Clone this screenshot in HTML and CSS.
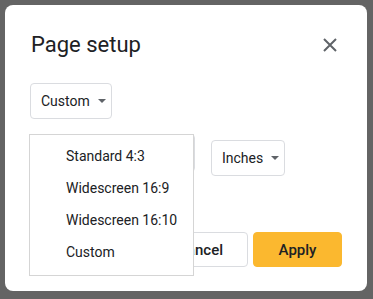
FILE: index.html
```html
<!DOCTYPE html>
<html lang="en">
<head>
    <meta charset="UTF-8">
    <meta name="viewport" content="width=device-width, initial-scale=1.0">
    <title>Page setup</title>
    <link rel="stylesheet" href="styles.css">
</head>
<body>
    <div class="dialog">
        <header class="dialog-head">
            <h1>Page setup</h1>
            <button class="close" aria-label="Close">
                <svg width="14" height="14" viewBox="0 0 14 14">
                    <path d="M1 1L13 13M13 1L1 13" stroke="#5f6368" stroke-width="2"/>
                </svg>
            </button>
        </header>

        <div class="dropdown size">Custom <span class="caret"></span></div>

        <div class="row">
            <div class="dropdown wide"></div>
            <div class="dropdown">Inches <span class="caret"></span></div>
        </div>

        <footer class="actions">
            <button class="btn">Cancel</button>
            <button class="btn primary">Apply</button>
        </footer>

        <!-- menu abierto sobre la fila -->
        <ul class="menu">
            <li>Standard 4:3</li>
            <li>Widescreen 16:9</li>
            <li>Widescreen 16:10</li>
            <li>Custom</li>
        </ul>
    </div>
</body>
</html>
```

FILE: styles.css
```css
* {
    box-sizing: border-box;
    margin: 0;
    padding: 0;
}

body {
    font-family: Roboto, "Liberation Sans", Arial, sans-serif;
    background-color: #646464;
    color: #202124;
    padding: 5px;
}

.dialog {
    position: relative;
    width: 362px;
    height: 286px;
    background-color: white;
    border-radius: 8px;
    padding: 25px 25px 24px 25px;
    display: flex;
    flex-direction: column;
    align-items: flex-start;
}

.dialog-head {
    width: 100%;
    display: flex;
    justify-content: space-between;
    align-items: center;
    height: 29px;
}

h1 {
    font-size: 22px;
    font-weight: 400;
    line-height: 28px;
    margin-left: 1px;
}

.close {
    background: none;
    border: none;
    width: 14px;
    height: 14px;
    margin-right: 5px;
    margin-top: 1px;
    display: flex;
}

.dropdown {
    height: 36px;
    border: 1px solid #dadce0;
    border-radius: 4px;
    padding: 0 8px 0 10px;
    font-size: 14px;
    display: flex;
    align-items: center;
    gap: 8px;
    background-color: white;
}

.size {
    margin-top: 24px;
    width: 82px;
}

.row {
    display: flex;
    align-items: flex-end;
    gap: 16px;
    margin-top: 15px;
}

.row .dropdown {
    width: 74px;
}

.row .dropdown.wide {
    width: 165px;
    height: 38px;
    margin-bottom: 4px;
}

.caret {
    width: 0;
    height: 0;
    border-left: 4px solid transparent;
    border-right: 4px solid transparent;
    border-top: 4px solid #5f6368;
}

.actions {
    margin-top: auto;
    align-self: flex-end;
    display: flex;
    gap: 5px;
}

.btn {
    height: 35px;
    border: 1px solid #dadce0;
    border-radius: 4px;
    background-color: white;
    font-family: inherit;
    font-size: 15px;
    font-weight: 500;
    color: #202124;
    padding: 0 24px;
}

.btn.primary {
    background-color: #fbb82f;
    border-color: #fbb82f;
    width: 89px;
}

.menu {
    position: absolute;
    left: 24px;
    top: 129px;
    width: 165px;
    height: 142px;
    list-style: none;
    background-color: white;
    border: 1px solid #d5d5d5;
    padding: 5px 0 0 36px;
    font-size: 14px;
}

.menu li {
    height: 32px;
    line-height: 32px;
}
```
